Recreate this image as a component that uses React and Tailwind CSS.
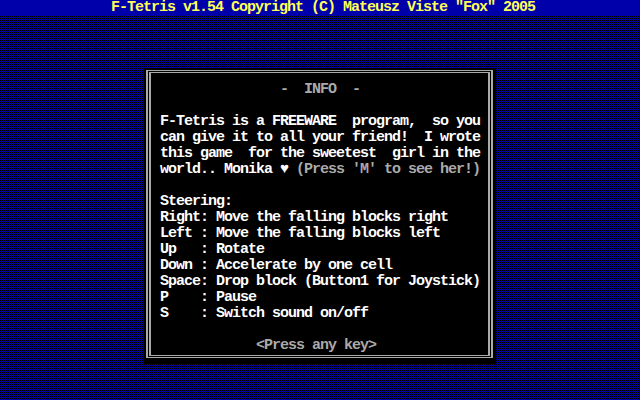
import React from 'react';

const intro = [
  'F-Tetris is a FREEWARE  program,  so you',
  'can give it to all your friend!  I wrote',
  'this game  for the sweetest  girl in the',
];

const keys = [
  'Right: Move the falling blocks right',
  'Left : Move the falling blocks left',
  'Up   : Rotate',
  'Down : Accelerate by one cell',
  'Space: Drop block (Button1 for Joystick)',
  'P    : Pause',
  'S    : Switch sound on/off',
];

export default function App() {
  return (
    <div className="w-[640px] h-[400px] flex flex-col bg-black overflow-hidden font-['Liberation_Mono','DejaVu_Sans_Mono',monospace] font-bold text-[15px] leading-4 tracking-[-1px] whitespace-pre">
      {/* title bar */}
      <div className="h-4 bg-[#0000aa] text-[#ffff55] flex justify-center pl-[6px]">
        F-Tetris v1.54 Copyright (C) Mateusz Viste "Fox" 2005
      </div>

      {/* dithered desktop (blue/black shade) */}
      <div className="flex-1 bg-[image:repeating-conic-gradient(#0000aa_0%_25%,#000000_0%_50%)] bg-[length:2px_2px] pl-[144px] pt-[52px]">
        <div className="w-[352px] h-[296px] bg-black pt-[2px] pl-[2px] pr-[3px] pb-[6px] flex">
          <div className="flex-1 flex border-x-2 border-y border-[#aaaaaa] p-px">
            <div className="flex-1 flex flex-col border-x-2 border-y border-[#aaaaaa] pl-[9px] pt-[9px] text-white">
              <div className="text-[#aaaaaa]">{'               -  INFO  -'}</div>
              <div className="h-4" />
              {intro.map((l) => (
                <div key={l}>{l}</div>
              ))}
              <div>
                world.. Monika ♥ <span className="text-[#aaaaaa]">(Press 'M' to see her!)</span>
              </div>
              <div className="h-4" />
              <div>Steering:</div>
              {keys.map((l) => (
                <div key={l}>{l}</div>
              ))}
              <div className="h-4" />
              <div className="text-[#aaaaaa]">{'            <Press any key>'}</div>
            </div>
          </div>
        </div>
      </div>
    </div>
  );
}
